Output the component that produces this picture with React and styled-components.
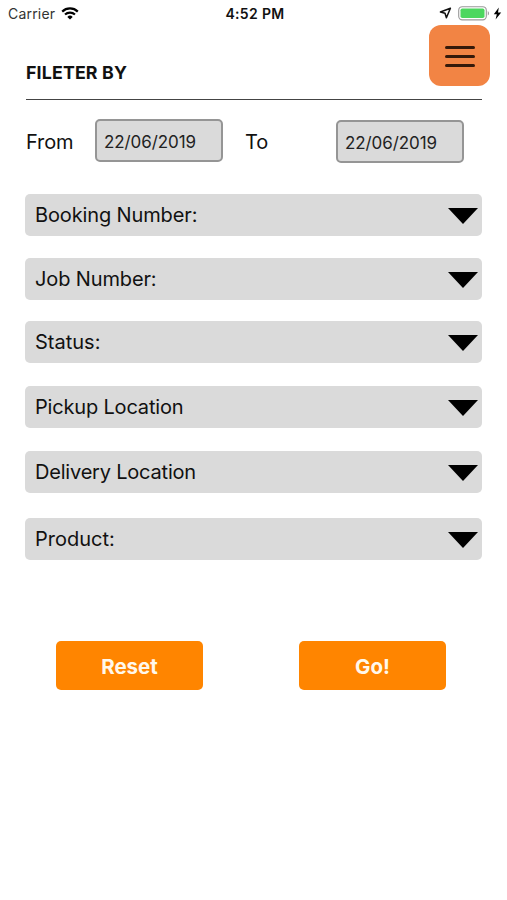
import React, { useState } from "react";
import styled, { createGlobalStyle } from "styled-components";

const GlobalStyle = createGlobalStyle`
  * {
    box-sizing: border-box;
  }

  body {
    margin: 0;
    background: #fff;
    color: #111;
    font-family: Inter, "Liberation Sans", sans-serif;
  }
`;

const Screen = styled.div`
  display: flex;
  flex-direction: column;
  min-height: 900px;
`;

const StatusBar = styled.div`
  display: grid;
  grid-template-columns: 1fr auto 1fr;
  align-items: center;
  height: 26px;
  padding: 0 5px 0 8px;
  font-size: 14px;
`;

const Carrier = styled.div`
  display: flex;
  align-items: center;
  gap: 6px;
  color: #333;
  letter-spacing: 0.2px;
`;

const Clock = styled.div`
  font-weight: 600;
  letter-spacing: 0.35px;
`;

const StatusIcons = styled.div`
  display: flex;
  align-items: center;
  justify-content: flex-end;

  & svg {
    display: block;
  }
`;

const Header = styled.header`
  display: flex;
  justify-content: space-between;
  height: 74px;
  margin: 0 25px 0 26px;
  border-bottom: 1px solid #444;
`;

const Title = styled.h1`
  margin: 37px 0 0;
  font-size: 17.8px;
  line-height: 20px;
  font-weight: 700;
  letter-spacing: 0.15px;
`;

const MenuButton = styled.button`
  display: flex;
  flex-direction: column;
  align-items: center;
  justify-content: center;
  gap: 6px;
  width: 61px;
  height: 61px;
  margin: -1px -8px 0 0;
  padding: 1px 0 0;
  border: none;
  border-radius: 12px;
  background: #f28444;

  & span {
    width: 30px;
    height: 3px;
    border-radius: 2px;
    background: #35190a;
  }
`;

const DateRow = styled.div`
  display: flex;
  align-items: flex-start;
  padding: 19px 0 0 26px;
`;

const DateLabel = styled.label`
  width: ${(props) => props.$width}px;
  padding-top: 10px;
  font-size: 20px;
  line-height: 26px;
  letter-spacing: -0.1px;
`;

const DateInput = styled.input`
  width: 128px;
  height: 43px;
  margin-top: ${(props) => props.$offset || 0}px;
  margin-right: 22px;
  padding: 3px 0 0 7px;
  border: 2px solid #959595;
  border-radius: 5px;
  background: #dadada;
  color: #222;
  font-family: inherit;
  font-size: 17px;
  letter-spacing: -0.08px;
`;

const FilterList = styled.div`
  display: flex;
  flex-direction: column;
  padding: 31px 25px 0;
`;

const FilterRow = styled.button`
  display: flex;
  align-items: center;
  justify-content: space-between;
  height: 42px;
  margin: 0 0 ${(props) => props.$gap}px;
  padding: 0 4px 0 10px;
  border: none;
  border-radius: 5px;
  background: #dadada;
  color: #111;
  font-family: inherit;
  font-size: 20px;
  line-height: 26px;
  letter-spacing: ${(props) => props.$spacing}px;
`;

const Caret = styled.span`
  margin-top: 2px;
  border-top: 16px solid #000;
  border-left: 15.5px solid transparent;
  border-right: 15.5px solid transparent;
`;

const Actions = styled.div`
  display: flex;
  gap: 96px;
  padding: 81px 0 0 56px;
`;

const ActionButton = styled.button`
  width: 147px;
  height: 49px;
  padding: 1px 0 0;
  border: none;
  border-radius: 5px;
  background: #ff8500;
  color: #fff8ec;
  font-family: inherit;
  font-size: 20.5px;
  font-weight: 650;
`;

const filters = [
  { label: "Booking Number:", gap: 22, spacing: -0.13 },
  { label: "Job Number:", gap: 21, spacing: -0.13 },
  { label: "Status:", gap: 23, spacing: 0 },
  { label: "Pickup Location", gap: 23, spacing: -0.18 },
  { label: "Delivery Location", gap: 25, spacing: -0.2 },
  { label: "Product:", gap: 0, spacing: 0 },
];

const WifiIcon = () => (
  <svg width="18" height="13" viewBox="0 0 18 13" fill="none" stroke="#000">
    <path d="M1.2 4.6a11.2 11.2 0 0 1 15.6 0" strokeWidth="2.2" />
    <path d="M4 7.6a7.2 7.2 0 0 1 10 0" strokeWidth="2.1" />
    <path d="M9 12.6 6.3 9.9a3.9 3.9 0 0 1 5.4 0z" fill="#000" stroke="none" />
  </svg>
);

const LocationIcon = () => (
  <svg width="13" height="12" viewBox="0 0 13 12" fill="none">
    <path
      d="M11.4 1.2 1.4 5l4.6 1.3 1.4 4.5z"
      stroke="#111"
      strokeWidth="1.5"
      strokeLinejoin="round"
    />
  </svg>
);

const BatteryIcon = () => (
  <svg width="32" height="15" viewBox="0 0 32 15">
    <rect
      x="0.7"
      y="0.7"
      width="27.6"
      height="13.2"
      rx="3.6"
      fill="#fff"
      stroke="#999"
      strokeWidth="1.1"
    />
    <rect x="2.5" y="2.5" width="24" height="9.6" rx="1.8" fill="#4cd75f" />
    <path d="M29.8 5v4.6c1.6-.8 1.6-3.8 0-4.6z" fill="#999" />
  </svg>
);

const BoltIcon = () => (
  <svg width="9" height="13" viewBox="0 0 9 13">
    <path d="M5.8.5.8 7.2h3L2.6 12.5 8.2 5.4H5z" fill="#000" />
  </svg>
);

const App = () => {
  const [dates, setDates] = useState({ from: "22/06/2019", to: "22/06/2019" });

  const handleDateChange = (e) => {
    setDates((prev) => ({ ...prev, [e.target.name]: e.target.value }));
  };

  return (
    <Screen>
      <GlobalStyle />
      <StatusBar>
        <Carrier>
          Carrier
          <WifiIcon />
        </Carrier>
        <Clock>4:52 PM</Clock>
        <StatusIcons>
          <LocationIcon />
          <Spacer $width={6} />
          <BatteryIcon />
          <Spacer $width={3} />
          <BoltIcon />
        </StatusIcons>
      </StatusBar>

      <Header>
        <Title>FILETER BY</Title>
        <MenuButton type="button" aria-label="Menu">
          <span />
          <span />
          <span />
        </MenuButton>
      </Header>

      <DateRow>
        <DateLabel htmlFor="from" $width={69}>
          From
        </DateLabel>
        <DateInput
          id="from"
          name="from"
          value={dates.from}
          onChange={handleDateChange}
        />
        <DateLabel htmlFor="to" $width={91}>
          To
        </DateLabel>
        <DateInput
          id="to"
          name="to"
          $offset={1}
          value={dates.to}
          onChange={handleDateChange}
        />
      </DateRow>

      <FilterList>
        {filters.map((itm) => (
          <FilterRow
            key={itm.label}
            type="button"
            $gap={itm.gap}
            $spacing={itm.spacing}
          >
            {itm.label}
            <Caret />
          </FilterRow>
        ))}
      </FilterList>

      <Actions>
        <ActionButton type="button">Reset</ActionButton>
        <ActionButton type="button">Go!</ActionButton>
      </Actions>
    </Screen>
  );
};

const Spacer = styled.span`
  width: ${(props) => props.$width}px;
`;

export default App;
